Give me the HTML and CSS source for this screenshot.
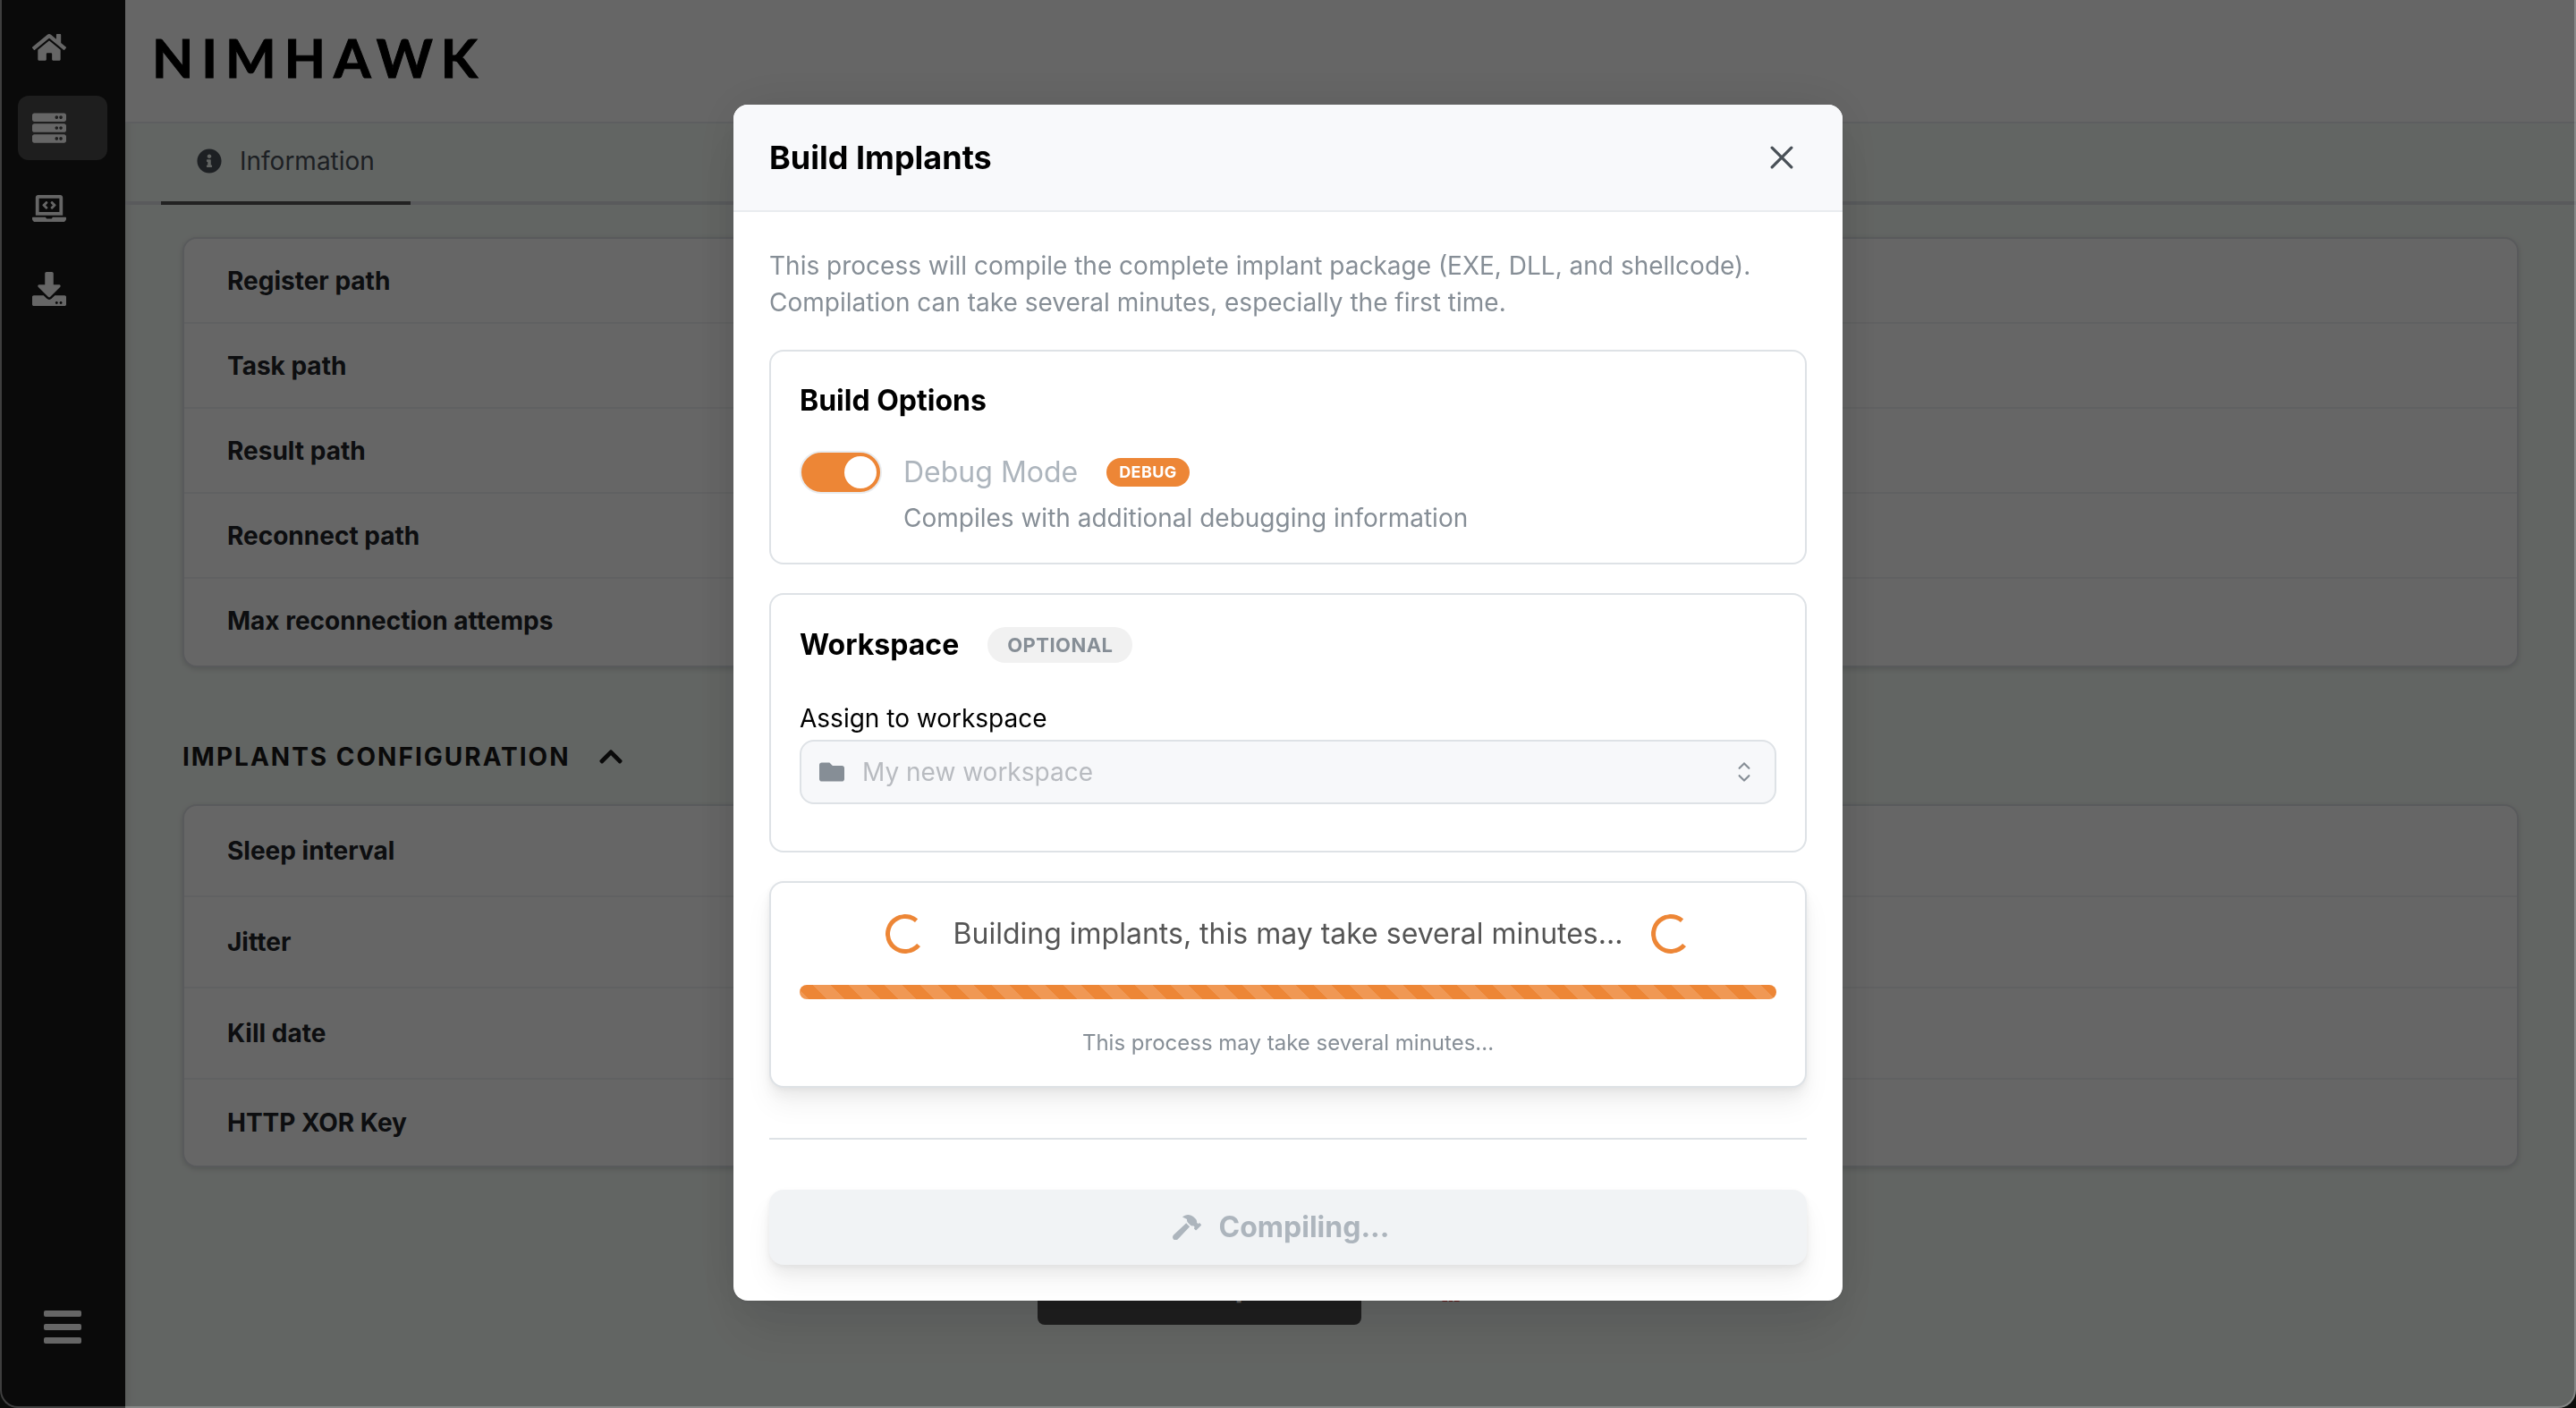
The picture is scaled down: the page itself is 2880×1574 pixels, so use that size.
FILE: index.html
```html
<!DOCTYPE html>
<html lang="en">
<head>
<meta charset="utf-8">
<meta name="viewport" content="width=device-width, initial-scale=1">
<title>Nimhawk</title>
<link rel="stylesheet" href="styles.css">
</head>
<body>
<div class="app">
  <nav class="sidebar" aria-label="Main">
    <ul class="nav-list">
      <li><a class="nav-item" href="#home" aria-label="Home"><svg class="nav-icon" viewBox="0 0 576 512"><path d="M280.37 148.26L96 300.11V464a16 16 0 0 0 16 16l112.06-.29a16 16 0 0 0 15.92-16V368a16 16 0 0 1 16-16h64a16 16 0 0 1 16 16v95.64a16 16 0 0 0 16 16.05L464 480a16 16 0 0 0 16-16V300L295.67 148.26a12.19 12.19 0 0 0-15.3 0zM571.6 251.47L488 182.56V44.05a12 12 0 0 0-12-12h-56a12 12 0 0 0-12 12v72.61L318.47 43a48 48 0 0 0-61 0L4.34 251.47a12 12 0 0 0-1.6 16.9l25.5 31A12 12 0 0 0 45.15 301l235.22-193.74a12.19 12.19 0 0 1 15.3 0L530.9 301a12 12 0 0 0 16.9-1.6l25.5-31a12 12 0 0 0-1.7-16.93z"/></svg></a></li>
      <li><a class="nav-item nav-item-active" href="#server" aria-label="Server" aria-current="page"><svg class="nav-icon" viewBox="0 0 512 512"><path d="M480 160H32c-17.673 0-32-14.327-32-32V64c0-17.673 14.327-32 32-32h448c17.673 0 32 14.327 32 32v64c0 17.673-14.327 32-32 32zm-48-88c-13.255 0-24 10.745-24 24s10.745 24 24 24 24-10.745 24-24-10.745-24-24-24zm-64 0c-13.255 0-24 10.745-24 24s10.745 24 24 24 24-10.745 24-24-10.745-24-24-24zm112 248H32c-17.673 0-32-14.327-32-32v-64c0-17.673 14.327-32 32-32h448c17.673 0 32 14.327 32 32v64c0 17.673-14.327 32-32 32zm-48-88c-13.255 0-24 10.745-24 24s10.745 24 24 24 24-10.745 24-24-10.745-24-24-24zm-64 0c-13.255 0-24 10.745-24 24s10.745 24 24 24 24-10.745 24-24-10.745-24-24-24zm112 248H32c-17.673 0-32-14.327-32-32v-64c0-17.673 14.327-32 32-32h448c17.673 0 32 14.327 32 32v64c0 17.673-14.327 32-32 32zm-48-88c-13.255 0-24 10.745-24 24s10.745 24 24 24 24-10.745 24-24-10.745-24-24-24zm-64 0c-13.255 0-24 10.745-24 24s10.745 24 24 24 24-10.745 24-24-10.745-24-24-24z"/></svg></a></li>
      <li><a class="nav-item" href="#implants" aria-label="Implants"><svg class="nav-icon" viewBox="0 0 640 512"><path d="M255.03 261.65c6.25 6.25 16.38 6.25 22.63 0l11.31-11.31c6.25-6.25 6.25-16.38 0-22.63L253.25 192l35.71-35.72c6.25-6.25 6.25-16.38 0-22.63l-11.31-11.31c-6.25-6.25-16.38-6.25-22.63 0l-58.34 58.34c-6.25 6.25-6.25 16.38 0 22.63l58.35 58.34zm96.01-11.3l11.31 11.31c6.25 6.25 16.38 6.25 22.63 0l58.34-58.34c6.25-6.25 6.25-16.38 0-22.63l-58.34-58.34c-6.25-6.25-16.38-6.25-22.63 0l-11.31 11.31c-6.25 6.25-6.25 16.38 0 22.63L386.75 192l-35.71 35.72c-6.25 6.25-6.25 16.38 0 22.63zM624 416H381.54c-.74 19.81-14.71 32-32.74 32H288c-18.69 0-33.02-17.47-32.77-32H16c-8.8 0-16 7.2-16 16v16c0 35.2 28.8 64 64 64h512c35.2 0 64-28.8 64-64v-16c0-8.8-7.2-16-16-16zM576 48c0-26.4-21.6-48-48-48H112C85.6 0 64 21.6 64 48v336h512V48zm-64 272H128V64h384v256z"/></svg></a></li>
      <li><a class="nav-item" href="#downloads" aria-label="Downloads"><svg class="nav-icon" viewBox="0 0 512 512"><path d="M216 0h80c13.3 0 24 10.7 24 24v168h87.7c17.8 0 26.7 21.5 14.1 34.1L269.7 378.3c-7.5 7.5-19.8 7.5-27.3 0L90.1 226.1c-12.6-12.6-3.7-34.1 14.1-34.1H192V24c0-13.3 10.7-24 24-24zm296 376v112c0 13.3-10.7 24-24 24H24c-13.3 0-24-10.7-24-24V376c0-13.3 10.7-24 24-24h146.7l49 49c20.1 20.1 52.5 20.1 72.6 0l49-49H488c13.3 0 24 10.7 24 24zm-124 88c0-11-9-20-20-20s-20 9-20 20 9 20 20 20 20-9 20-20zm64 0c0-11-9-20-20-20s-20 9-20 20 9 20 20 20 20-9 20-20z"/></svg></a></li>
    </ul>
    <button class="burger" type="button" aria-label="Toggle menu"><span></span><span></span><span></span></button>
  </nav>

  <div class="page">
    <header class="topbar"><span class="logo">NIMHAWK</span></header>
    <div class="tabs" role="tablist">
      <button class="tab" type="button" role="tab" aria-selected="true">
        <svg class="tab-icon" viewBox="0 0 512 512"><path d="M256 8C119.043 8 8 119.083 8 256c0 136.997 111.043 248 248 248s248-111.003 248-248C504 119.083 392.957 8 256 8zm0 110c23.196 0 42 18.804 42 42s-18.804 42-42 42-42-18.804-42-42 18.804-42 42-42zm56 254c0 6.627-5.373 12-12 12h-88c-6.627 0-12-5.373-12-12v-24c0-6.627 5.373-12 12-12h12v-64h-12c-6.627 0-12-5.373-12-12v-24c0-6.627 5.373-12 12-12h64c6.627 0 12 5.373 12 12v100h12c6.627 0 12 5.373 12 12v24z"/></svg>
        Information
      </button>
    </div>
    <main class="content">
      <table class="info-table">
        <tbody>
          <tr><th scope="row">Register path</th></tr>
          <tr><th scope="row">Task path</th></tr>
          <tr><th scope="row">Result path</th></tr>
          <tr><th scope="row">Reconnect path</th></tr>
          <tr><th scope="row">Max reconnection attemps</th></tr>
        </tbody>
      </table>
      <h2 class="section-title">IMPLANTS CONFIGURATION
        <svg class="section-icon" viewBox="0 0 448 512"><path d="M240.971 130.524l194.343 194.343c9.373 9.373 9.373 24.569 0 33.941l-22.667 22.667c-9.357 9.357-24.522 9.375-33.901.04L224 227.495 69.255 381.516c-9.379 9.335-24.544 9.317-33.901-.04l-22.667-22.667c-9.373-9.373-9.373-24.569 0-33.941L207.03 130.525c9.372-9.373 24.568-9.373 33.941-.001z"/></svg>
      </h2>
      <table class="info-table info-table-tall">
        <tbody>
          <tr><th scope="row">Sleep interval</th></tr>
          <tr><th scope="row">Jitter</th></tr>
          <tr><th scope="row">Kill date</th></tr>
          <tr><th scope="row">HTTP XOR Key</th></tr>
        </tbody>
      </table>
      <div class="actions">
        <button class="action action-build" type="button">
          <svg class="action-icon" viewBox="0 0 576 512"><path d="M571.31 193.94l-22.63-22.63c-6.25-6.25-16.38-6.25-22.63 0l-11.31 11.31-28.9-28.9c5.63-21.31.36-44.9-16.35-61.61l-45.25-45.25c-62.48-62.48-163.79-62.48-226.28 0l90.51 45.25v18.75c0 16.97 6.74 33.25 18.75 45.25l49.14 49.14c16.71 16.71 40.3 21.98 61.61 16.35l28.9 28.9-11.31 11.31c-6.25 6.25-6.25 16.38 0 22.63l22.63 22.63c6.25 6.25 16.38 6.25 22.63 0l90.51-90.51c6.23-6.24 6.23-16.37-.02-22.62zm-286.72-15.2c-3.7-3.7-6.84-7.79-9.85-11.95L19.64 404.96c-25.57 23.88-26.26 64.19-1.53 88.93s65.05 24.05 88.92-1.53l238.13-255.07c-3.96-2.91-7.9-5.87-11.44-9.41l-49.13-49.14z"/></svg>
          Build Implants
        </button>
        <button class="action action-kill" type="button">
          <svg class="action-icon" viewBox="0 0 512 512"><path d="M256 0C114.6 0 0 100.3 0 224c0 70.1 36.9 132.6 94.5 173.7 9.6 6.9 15.2 18.1 13.5 29.9l-9.4 66.2c-1.4 9.6 6 18.2 15.7 18.2H192v-56c0-4.4 3.6-8 8-8h16c4.4 0 8 3.6 8 8v56h64v-56c0-4.4 3.6-8 8-8h16c4.4 0 8 3.6 8 8v56h77.7c9.7 0 17.1-8.6 15.7-18.2l-9.4-66.2c-1.7-11.7 3.8-23 13.5-29.9C475.1 356.6 512 294.1 512 224 512 100.3 397.4 0 256 0zm-96 320c-35.3 0-64-28.7-64-64s28.7-64 64-64 64 28.7 64 64-28.7 64-64 64zm192 0c-35.3 0-64-28.7-64-64s28.7-64 64-64 64 28.7 64 64-28.7 64-64 64z"/></svg>
          Kill server
        </button>
      </div>
    </main>
  </div>
</div>

<div class="overlay">
  <section class="modal" role="dialog" aria-modal="true" aria-labelledby="modal-title">
    <header class="modal-header">
      <h2 class="modal-title" id="modal-title">Build Implants</h2>
      <button class="close" type="button" aria-label="Close"><svg viewBox="0 0 24 24"><path d="M2 2L22 22M22 2L2 22"/></svg></button>
    </header>
    <div class="modal-body">
      <p class="intro">This process will compile the complete implant package (EXE, DLL, and shellcode). Compilation can take several minutes, especially the first time.</p>

      <section class="panel">
        <h3 class="panel-title">Build Options</h3>
        <div class="switch-row">
          <input class="switch" type="checkbox" id="debug" checked disabled aria-describedby="debug-note">
          <label class="switch-label" for="debug">Debug Mode</label>
          <span class="badge badge-debug">DEBUG</span>
        </div>
        <p class="switch-note" id="debug-note">Compiles with additional debugging information</p>
      </section>

      <section class="panel panel-workspace">
        <div class="panel-head">
          <h3 class="panel-title">Workspace</h3>
          <span class="badge badge-optional">OPTIONAL</span>
        </div>
        <label class="field-label" for="workspace">Assign to workspace</label>
        <div class="field">
          <select class="select" id="workspace" disabled><option>My new workspace</option></select>
          <svg class="field-folder" viewBox="0 0 512 512"><path d="M464 128H272l-64-64H48C21.49 64 0 85.49 0 112v288c0 26.51 21.49 48 48 48h416c26.51 0 48-21.49 48-48V176c0-26.51-21.49-48-48-48z"/></svg>
          <svg class="field-chevron" viewBox="0 0 15 15"><path d="M4.93179 5.43179C4.75605 5.60753 4.75605 5.89245 4.93179 6.06819C5.10753 6.24392 5.39245 6.24392 5.56819 6.06819L7.49999 4.13638L9.43179 6.06819C9.60753 6.24392 9.89245 6.24392 10.0682 6.06819C10.2439 5.89245 10.2439 5.60753 10.0682 5.43179L7.81819 3.18179C7.73379 3.0974 7.61933 3.04999 7.49999 3.04999C7.38064 3.04999 7.26618 3.0974 7.18179 3.18179L4.93179 5.43179ZM10.0682 9.56819C10.2439 9.39245 10.2439 9.10753 10.0682 8.93179C9.89245 8.75606 9.60753 8.75606 9.43179 8.93179L7.49999 10.8636L5.56819 8.93179C5.39245 8.75606 5.10753 8.75606 4.93179 8.93179C4.75605 9.10753 4.75605 9.39245 4.93179 9.56819L7.18179 11.8182C7.35753 11.9939 7.64245 11.9939 7.81819 11.8182L10.0682 9.56819Z"/></svg>
        </div>
      </section>

      <section class="panel panel-raised" aria-live="polite">
        <div class="status">
          <span class="loader"></span>
          <p class="status-text">Building implants, this may take several minutes...</p>
          <span class="loader"></span>
        </div>
        <div class="progress" role="progressbar" aria-label="Build progress"></div>
        <p class="status-note">This process may take several minutes...</p>
      </section>

      <hr class="divider">
      <button class="submit" type="button" disabled>
        <svg class="action-icon" viewBox="0 0 576 512"><path d="M571.31 193.94l-22.63-22.63c-6.25-6.25-16.38-6.25-22.63 0l-11.31 11.31-28.9-28.9c5.63-21.31.36-44.9-16.35-61.61l-45.25-45.25c-62.48-62.48-163.79-62.48-226.28 0l90.51 45.25v18.75c0 16.97 6.74 33.25 18.75 45.25l49.14 49.14c16.71 16.71 40.3 21.98 61.61 16.35l28.9 28.9-11.31 11.31c-6.25 6.25-6.25 16.38 0 22.63l22.63 22.63c6.25 6.25 16.38 6.25 22.63 0l90.51-90.51c6.23-6.24 6.23-16.37-.02-22.62zm-286.72-15.2c-3.7-3.7-6.84-7.79-9.85-11.95L19.64 404.96c-25.57 23.88-26.26 64.19-1.53 88.93s65.05 24.05 88.92-1.53l238.13-255.07c-3.96-2.91-7.9-5.87-11.44-9.41l-49.13-49.14z"/></svg>
        Compiling...
      </button>
    </div>
  </section>
</div>
<div class="window-frame" aria-hidden="true"></div>
</body>
</html>
```

FILE: styles.css
```css
*, *::before, *::after { box-sizing: border-box; }

body {
  margin: 0;
  font-family: Inter, "Liberation Sans", sans-serif;
  font-size: 28px;
  line-height: 40px;
  color: #212529;
  background: #f6fcf8;
}

h2, h3, p, ul { margin: 0; padding: 0; }
ul { list-style: none; }
button, select { font: inherit; }
svg { display: block; fill: currentColor; flex: none; }

/* Page shell */
.app { display: flex; min-height: 100vh; }

.sidebar {
  display: flex;
  flex-direction: column;
  justify-content: space-between;
  flex: none;
  width: 140px;
  padding: 17px 20px 72px;
  background: #191919;
  color: #fff;
  box-shadow: 0 0 12px rgba(0, 0, 0, .15);
}

.nav-list { display: flex; flex-direction: column; gap: 18px; }

.nav-item {
  display: flex;
  align-items: center;
  height: 72px;
  padding: 0 16px;
  border-radius: 12px;
  color: inherit;
}
.nav-item-active { background: #4b4b4b; }
.nav-icon { width: 38px; }

.burger {
  display: flex;
  flex-direction: column;
  align-self: center;
  gap: 8px;
  width: 42px;
  padding: 0;
  border: 0;
  background: none;
}
.burger span { height: 7px; border-radius: 2px; background: #fff; }

.page { flex: 1; min-width: 0; }

.topbar {
  display: flex;
  align-items: center;
  height: 138px;
  padding: 0 30px 8px;
  background: #fff;
  border-bottom: 2px solid #e9ecef;
}
.logo {
  font-family: Lato, sans-serif;
  font-size: 60px;
  line-height: 72px;
  font-weight: 700;
  letter-spacing: 9px;
  -webkit-text-stroke: 1px #000;
  color: #000;
}

.tabs {
  display: flex;
  padding: 0 40px;
  box-shadow: inset 0 -4px #dee2e6;
}
.tab {
  display: flex;
  align-items: center;
  gap: 20px;
  height: 91px;
  padding: 0 40px 4px;
  border: 0;
  border-bottom: 4px solid #555;
  background: none;
  color: #495057;
}
.tab-icon { width: 28px; }

.content { padding: 36px 64px 84px; }

.info-table {
  display: block;
  border: 2px solid #dee2e6;
  border-radius: 16px;
  background: #fff;
  box-shadow: 0 2px 6px rgba(0, 0, 0, .15);
}
.info-table tbody { display: block; }
.info-table tr { display: flex; border-bottom: 2px solid #f1f3f5; }
.info-table tr:last-child { border-bottom: 0; }
.info-table th {
  padding: 27px 48px 26px;
  font-weight: 700;
  text-align: left;
}
.info-table tr:last-child th { padding-bottom: 30px; }
.info-table-tall th { padding-block: 30px; }
.info-table-tall tr:last-child th { padding-block: 28px; }

.section-title {
  display: flex;
  align-items: center;
  gap: 32px;
  margin: 80px 0 33px;
  font-size: 28px;
  font-weight: 700;
  letter-spacing: 2px;
  color: #191919;
}
.section-icon { width: 26px; }

.actions {
  display: flex;
  justify-content: center;
  gap: 40px;
  margin-top: 92px;
}
.action {
  display: flex;
  align-items: center;
  gap: 20px;
  height: 84px;
  padding: 0 44px;
  border: 0;
  border-radius: 8px;
  font-size: 32px;
  font-weight: 700;
}
.action-build { background: #4d4d4d; color: #fff; }
.action-kill { background: none; color: #e03131; }
.action-icon { width: 32px; }

/* Dialog */
.overlay {
  position: fixed;
  inset: 0;
  display: flex;
  justify-content: center;
  align-items: flex-start;
  padding: 117px 40px 40px;
  overflow: auto;
  background: rgba(0, 0, 0, .6);
}

.modal {
  width: 100%;
  max-width: 1240px;
  overflow: hidden;
  border-radius: 16px;
  background: #fff;
  color: #000;
  box-shadow: 0 2px 6px rgba(0, 0, 0, .05), 0 40px 60px rgba(0, 0, 0, .08), 0 0 60px rgba(0, 0, 0, .1);
}

.modal-header {
  display: flex;
  align-items: center;
  justify-content: space-between;
  height: 120px;
  padding: 0 40px;
  background: #f8f9fb;
  border-bottom: 2px solid #e9ecef;
}
.modal-title { font-size: 36px; line-height: 48px; font-weight: 700; }

.close {
  display: grid;
  place-items: center;
  width: 56px;
  height: 56px;
  padding: 0;
  border: 0;
  background: none;
  color: #495057;
}
.close svg { width: 26px; fill: none; stroke: currentColor; stroke-width: 3; stroke-linecap: round; }

.modal-body { padding: 40px; }
.intro { line-height: 41px; color: #868e96; }

.panel {
  margin-top: 32px;
  padding: 32px;
  border: 2px solid #dee2e6;
  border-radius: 16px;
  background: #fff;
}
.panel-title { font-size: 32px; line-height: 46px; font-weight: 700; }
.panel-workspace { padding-bottom: 52px; }
.panel-raised { box-shadow: 0 2px 6px rgba(0, 0, 0, .05), 0 20px 30px rgba(0, 0, 0, .05), 0 10px 14px rgba(0, 0, 0, .04); }

.switch-row { display: flex; align-items: center; height: 48px; margin-top: 33px; }

.switch {
  appearance: none;
  width: 92px;
  height: 48px;
  margin: 0 24px 0 0;
  padding: 4px;
  border: 2px solid #e9ecef;
  border-radius: 24px;
  background: #ed8636;
}
.switch::before {
  content: "";
  display: block;
  width: 36px;
  height: 36px;
  margin-left: auto;
  border-radius: 50%;
  background: #fff;
}
.switch-label { margin-right: 32px; font-size: 32px; color: #adb5bd; }
.switch-note { margin: 9px 0 0 116px; line-height: 36px; color: #868e96; }

.badge { display: inline-flex; align-items: center; border-radius: 20px; font-weight: 700; letter-spacing: 0.02em; }
.badge-debug { height: 32px; padding: 0 14px; font-size: 18px; background: #ed8636; color: #fff; }
.badge-optional { height: 40px; padding: 0 22px; font-size: 22px; background: #f1f1f1; color: #868e96; }

.panel-head { display: flex; align-items: center; gap: 32px; height: 48px; }

.field-label { display: block; margin: 40px 0 6px; line-height: 36px; }
.field { position: relative; }
.select {
  display: block;
  appearance: none;
  width: 100%;
  height: 72px;
  padding: 0 68px;
  border: 2px solid #dee2e6;
  border-radius: 16px;
  background: #f7f8fa;
  color: #b8bbc0;
  opacity: 1;
}
.field-folder, .field-chevron { position: absolute; top: 0; bottom: 0; margin: auto 0; color: #868e96; }
.field-folder { left: 22px; width: 28px; }
.field-chevron { right: 18px; width: 36px; }

.status { display: flex; align-items: center; justify-content: center; gap: 32px; height: 50px; }
.status-text { font-size: 32px; color: #555; }
.loader {
  width: 44px;
  height: 44px;
  border: 5px solid #ed8636;
  border-right-color: transparent;
  border-radius: 50%;
  transform: rotate(-5deg);
}

.progress {
  height: 16px;
  margin: 32px 0;
  border-radius: 8px;
  background-color: #ed8636;
  background-image: linear-gradient(45deg, rgba(255, 255, 255, .15) 25%, transparent 25%, transparent 50%, rgba(255, 255, 255, .15) 50%, rgba(255, 255, 255, .15) 75%, transparent 75%);
  background-size: 40px 40px;
  background-position: 15px 0;
}
.status-note { font-size: 24px; line-height: 33px; text-align: center; color: #868e96; }

.divider { height: 2px; margin: 56px 0; border: 0; background: #dee2e6; }

.submit {
  display: flex;
  align-items: center;
  justify-content: center;
  gap: 20px;
  width: 100%;
  height: 84px;
  padding: 0 16px 0 0;
  border: 0;
  border-radius: 16px;
  font-size: 32px;
  font-weight: 700;
  background: #f1f3f5;
  color: #adb5bd;
  box-shadow: 0 2px 6px rgba(0, 0, 0, .05), 0 20px 30px rgba(0, 0, 0, .05), 0 10px 14px rgba(0, 0, 0, .04);
}

/* Rounded edge of the application window */
.window-frame {
  position: fixed;
  inset: 0;
  border: solid rgba(255, 255, 255, .22);
  border-width: 0 2px 2px;
  border-radius: 0 0 20px 20px;
  box-shadow: 0 0 0 20px #0b0d0b;
  pointer-events: none;
}
```
